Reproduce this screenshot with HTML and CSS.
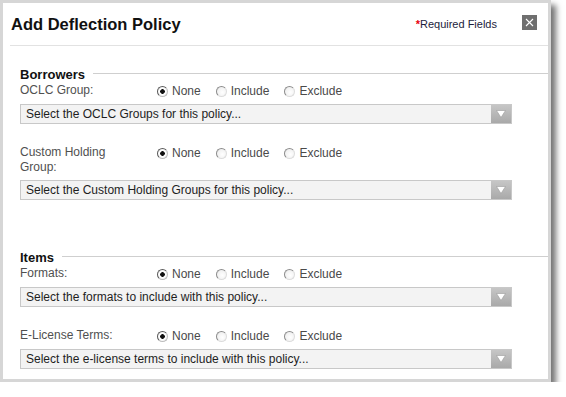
FILE: index.html
```html
<!DOCTYPE html>
<html lang="en">
<head>
    <meta charset="UTF-8">
    <title>Add Deflection Policy</title>
    <link rel="stylesheet" href="styles.css">
</head>
<body>
    <div class="dialog">
        <div class="dialog-header">
            <h1>Add Deflection Policy</h1>
            <span class="required"><span class="star">*</span>Required Fields</span>
            <button class="close" aria-label="Close">
                <svg width="15" height="15" viewBox="0 0 15 15"><path d="M4 4 L11 11 M11 4 L4 11" stroke="#fff" stroke-width="1.1" fill="none"/></svg>
            </button>
        </div>

        <div class="dialog-body">
            <div class="section">
                <div class="legend"><h2>Borrowers</h2></div>

                <div class="field">
                    <div class="field-row">
                        <span class="field-label">OCLC Group:</span>
                        <div class="choices">
                            <label><input type="radio" name="oclc" checked>None</label>
                            <label><input type="radio" name="oclc">Include</label>
                            <label><input type="radio" name="oclc">Exclude</label>
                        </div>
                    </div>
                    <div class="picker">
                        <span class="picker-text">Select the OCLC Groups for this policy...</span>
                        <span class="arrow"><svg width="10" height="8" viewBox="0 0 10 8"><path d="M0.5 0.5 H9.5 L5 7.5 Z" fill="#fff" stroke="#9a9a9a" stroke-width="0.6"/></svg></span>
                    </div>
                </div>

                <div class="field">
                    <div class="field-row">
                        <span class="field-label">Custom Holding Group:</span>
                        <div class="choices">
                            <label><input type="radio" name="holding" checked>None</label>
                            <label><input type="radio" name="holding">Include</label>
                            <label><input type="radio" name="holding">Exclude</label>
                        </div>
                    </div>
                    <div class="picker">
                        <span class="picker-text">Select the Custom Holding Groups for this policy...</span>
                        <span class="arrow"><svg width="10" height="8" viewBox="0 0 10 8"><path d="M0.5 0.5 H9.5 L5 7.5 Z" fill="#fff" stroke="#9a9a9a" stroke-width="0.6"/></svg></span>
                    </div>
                </div>
            </div>

            <div class="section">
                <div class="legend"><h2>Items</h2></div>

                <div class="field">
                    <div class="field-row">
                        <span class="field-label">Formats:</span>
                        <div class="choices">
                            <label><input type="radio" name="formats" checked>None</label>
                            <label><input type="radio" name="formats">Include</label>
                            <label><input type="radio" name="formats">Exclude</label>
                        </div>
                    </div>
                    <div class="picker">
                        <span class="picker-text">Select the formats to include with this policy...</span>
                        <span class="arrow"><svg width="10" height="8" viewBox="0 0 10 8"><path d="M0.5 0.5 H9.5 L5 7.5 Z" fill="#fff" stroke="#9a9a9a" stroke-width="0.6"/></svg></span>
                    </div>
                </div>

                <div class="field">
                    <div class="field-row">
                        <span class="field-label">E-License Terms:</span>
                        <div class="choices">
                            <label><input type="radio" name="license" checked>None</label>
                            <label><input type="radio" name="license">Include</label>
                            <label><input type="radio" name="license">Exclude</label>
                        </div>
                    </div>
                    <div class="picker">
                        <span class="picker-text">Select the e-license terms to include with this policy...</span>
                        <span class="arrow"><svg width="10" height="8" viewBox="0 0 10 8"><path d="M0.5 0.5 H9.5 L5 7.5 Z" fill="#fff" stroke="#9a9a9a" stroke-width="0.6"/></svg></span>
                    </div>
                </div>
            </div>
        </div>
    </div>
</body>
</html>
```

FILE: styles.css
```css
* {
    margin: 0;
    padding: 0;
    box-sizing: border-box;
}

body {
    font-family: 'Liberation Sans', Arial, sans-serif;
    background: white;
    color: #111;
}

.dialog {
    width: 551px;
    height: 382px;
    background: white;
    border: 3px solid #d6d6d6;
    box-shadow: 5px 5px 6px rgba(0,0,0,0.55);
    overflow: hidden;
}

.dialog-header {
    display: flex;
    align-items: flex-start;
    margin-left: 7px;
    padding: 11px 11px 11px 1px;
    border-bottom: 1px solid #e2e2e2;
}

.dialog-header h1 {
    font-size: 16.5px;
    line-height: 20px;
    font-weight: bold;
    color: #111;
    flex: 1;
}

.required {
    font-size: 11px;
    line-height: 13px;
    margin-top: 4px;
    color: #1c1c3c;
}

.star {
    color: #e8000b;
    font-weight: bold;
}

.close {
    width: 15px;
    height: 15px;
    margin-top: 1px;
    margin-left: 25px;
    border: none;
    background: #6f6f6f;
    display: flex;
    cursor: pointer;
}

.dialog-body {
    padding: 21px 36px 0 17px;
}

.section + .section {
    margin-top: 50px;
}

.legend {
    display: flex;
    align-items: flex-start;
}

.legend h2 {
    font-size: 13px;
    line-height: 16px;
    font-weight: bold;
    color: #111;
}

.legend::after {
    content: "";
    flex: 1;
    margin: 6px -36px 0 8px;
    border-top: 1px solid #cfcfcf;
}

.field + .field {
    margin-top: 21px;
}

.field-row {
    display: flex;
    align-items: flex-start;
    font-size: 12px;
    line-height: 15px;
    color: #505050;
}

.field-label {
    width: 110px;
    margin-right: 27px;
}

.choices {
    display: flex;
    padding-top: 1px;
}

.choices label {
    display: inline-flex;
    align-items: center;
    margin-right: 15px;
    color: #4a4a4a;
}

input[type="radio"] {
    appearance: none;
    -webkit-appearance: none;
    width: 11px;
    height: 11px;
    margin-right: 4px;
    border-radius: 50%;
    border: 1px solid;
    border-color: #8c8c8c #dcdcdc #dcdcdc #8c8c8c;
    background: radial-gradient(circle at 60% 60%, #fff 0%, #f0f0f0 70%, #e2e2e2 100%);
}

input[type="radio"]:checked {
    border-color: #5a5a5a #bdbdbd #bdbdbd #5a5a5a;
    background: radial-gradient(circle, #111 0, #111 2px, #fff 2.6px, #eee 100%);
}

.picker {
    display: flex;
    height: 20px;
    margin-top: 5px;
    border: 1px solid #c8c8c8;
    background: #f3f3f3;
}

.picker-text {
    flex: 1;
    padding-left: 5px;
    font-size: 12px;
    line-height: 18px;
    color: #1e1e1e;
}

.arrow {
    width: 20px;
    display: flex;
    align-items: center;
    justify-content: center;
    background: linear-gradient(#c6c6c6, #a9a9a9);
}
```
